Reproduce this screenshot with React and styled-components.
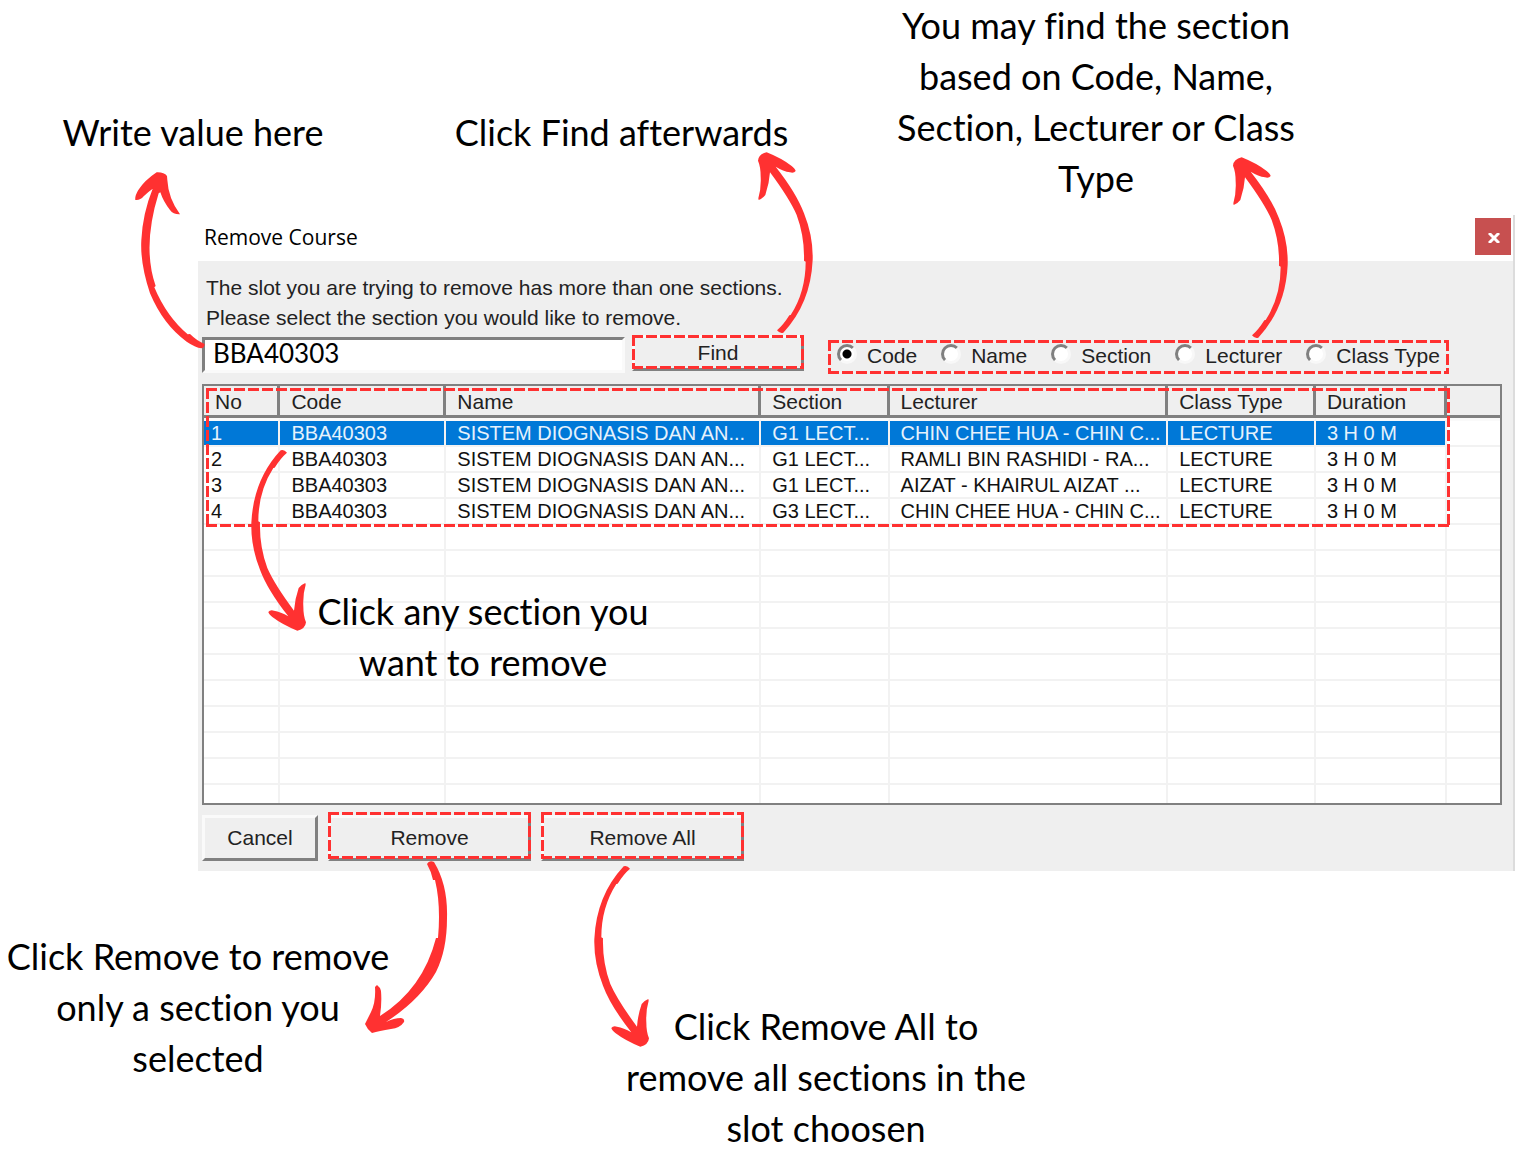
import React, { useState } from "react";
import styled, { createGlobalStyle, css } from "styled-components";

const GlobalStyle = createGlobalStyle`
  * {
    box-sizing: border-box;
  }
  body {
    margin: 0;
    background: #fff;
    color: #000;
    font-family: "Liberation Sans", Arial, sans-serif;
  }
`;

const RED = "#ff3131";

const Page = styled.main`
  position: relative;
`;

const TopNotes = styled.section`
  display: grid;
  grid-template-columns: 386fr 471fr 478fr 186fr;
  align-items: start;
  min-height: 215px;
`;

const BottomNotes = styled.section`
  display: grid;
  grid-template-columns: 396fr 860fr 265fr;
  padding: 60px 0 8px;
`;

const Note = styled.p`
  margin: 0;
  padding-top: ${({ $drop }) => $drop || 0}px;
  font-family: Lato, sans-serif;
  font-size: 36px;
  font-variant-ligatures: none;
  line-height: 51px;
  text-align: center;
`;

const TableNote = styled(Note)`
  position: absolute;
  top: 371px;
  left: 112px;
  width: 346px;
  pointer-events: none;
`;

const Window = styled.section`
  position: relative;
  margin: 0 6px 0 198px;
  border-right: 2px solid #dcdcdc;
`;

const TitleBar = styled.header`
  display: flex;
  align-items: center;
  justify-content: space-between;
  height: 46px;
  padding: 0 2px 3px 6px;
`;

const Title = styled.h1`
  margin: 0;
  font-family: "Open Sans", sans-serif;
  font-size: 21px;
  font-weight: 400;
`;

const CloseButton = styled.button`
  display: flex;
  align-items: center;
  justify-content: center;
  width: 36px;
  height: 37px;
  padding: 2px 0 0 2px;
  border: 0;
  background: #c75050;
`;

const Body = styled.div`
  padding: 12px 11px 10px 4px;
  background: #efefef;
`;

const Message = styled.p`
  margin: 0;
  padding-left: 4px;
  color: #222;
  font-size: 21px;
  line-height: 30px;
`;

const SearchRow = styled.div`
  display: flex;
  align-items: flex-start;
  padding-top: 2px;
  margin-bottom: 10px;
`;

const SearchInput = styled.input`
  width: 423px;
  height: 36px;
  margin: 2px 7px 0 0;
  padding: 0 8px 5px;
  border: 3px solid #fafafa;
  border-top-color: #808080;
  border-left-color: #808080;
  background: #fff;
  font-family: Lato, sans-serif;
  font-size: 26px;
`;

/* dashed marker frame, 11px dashes with 3px gaps */
const dashes = css`
  content: "";
  position: absolute;
  inset: 0;
  pointer-events: none;
  background:
    repeating-linear-gradient(90deg, ${RED} 0 11px, transparent 11px 14px) top / 100% 3px no-repeat,
    repeating-linear-gradient(90deg, ${RED} 0 11px, transparent 11px 14px) bottom / 100% 3px no-repeat,
    repeating-linear-gradient(${RED} 0 11px, transparent 11px 14px) left / 3px 100% no-repeat,
    repeating-linear-gradient(${RED} 0 11px, transparent 11px 14px) right / 3px 100% no-repeat;
`;

const Marked = styled.div`
  position: relative;

  &::after {
    ${dashes}
    top: ${({ $rise }) => -($rise || 0)}px;
    bottom: 2px;
  }
`;

const Button = styled.button`
  width: ${({ $width }) => $width}px;
  height: ${({ $height }) => $height || 46}px;
  padding: 0;
  border: 3px solid #808080;
  border-top-color: #fafafa;
  border-left-color: #fafafa;
  background: #efefef;
  color: #222;
  font-family: inherit;
  font-size: 21px;
`;

const Filters = styled.fieldset`
  position: relative;
  display: flex;
  align-items: center;
  gap: 24px;
  height: 34px;
  margin: 5px 0 0 24px;
  padding: 0 9px 2px;
  border: 0;

  &::after {
    ${dashes}
  }
`;

const FilterLabel = styled.label`
  display: flex;
  align-items: center;
  gap: 10px;
  color: #222;
  font-size: 21px;
  line-height: 28px;
  white-space: nowrap;
`;

const Radio = styled.input`
  appearance: none;
  width: 20px;
  height: 20px;
  margin: 0 0 4px;
  border: 3px solid #f8f8f8;
  border-top-color: #808080;
  border-left-color: #808080;
  border-radius: 50%;
  background: #fff;

  &:checked {
    background: radial-gradient(circle, #000 0 4px, #fff 5px);
  }
`;

const TableBox = styled.div`
  position: relative;
  border: 2px solid #808080;
  background: #fff;
`;

const TableMark = styled.div`
  position: absolute;
  top: 2px;
  left: 2px;
  width: 96%;
  height: 139px;
  pointer-events: none;

  &::after {
    ${dashes}
  }
`;

const Table = styled.table`
  width: 100%;
  table-layout: fixed;
  border-collapse: separate;
  border-spacing: 0;
`;

const Th = styled.th`
  width: ${({ $width }) => $width || "auto"};
  height: 32px;
  padding: 3px 0 0 11px;
  border-right: 3px solid #808080;
  border-bottom: 3px solid #808080;
  background: #efefef;
  color: #222;
  font-size: 21px;
  font-weight: 400;
  line-height: 26px;
  text-align: left;
  white-space: nowrap;

  &:last-child {
    border-right: 0;
  }
`;

const Td = styled.td`
  height: 26px;
  padding: 0 0 0 11px;
  border-right: 2px solid #f2f2f2;
  border-bottom: 2px solid #f2f2f2;
  color: #111;
  font-size: 20px;
  line-height: 24px;
  white-space: nowrap;
  overflow: hidden;

  &:first-child {
    padding-left: 7px;
  }
  &:last-child {
    border-right: 0;
  }
`;

const Row = styled.tr`
  cursor: default;

  &:first-child td {
    height: 29px;
    border-top: 3px solid #fafafa;
  }
  &:last-child td {
    height: 18px;
    border-bottom: 0;
  }
  ${({ $selected }) =>
    $selected &&
    css`
      td:not(:last-child) {
        background: #0078d7;
        background-clip: padding-box;
        color: #e6f2fc;
      }
    `}
`;

const Footer = styled.footer`
  display: flex;
  align-items: flex-end;
  gap: 10px;
  margin-top: 10px;
`;

const ArrowSvg = styled.svg`
  position: absolute;
  top: ${({ $top }) => $top}px;
  left: ${({ $left }) => $left}px;
  fill: ${RED};
  pointer-events: none;
  transform: ${({ $flip }) => ($flip ? "rotate(180deg)" : "none")};
`;

const RightArrow = (props) => (
  <ArrowSvg {...props} width="59" height="185" viewBox="468 30 177 555" aria-hidden="true">
    <path d="M500 37 Q545 55 575 78 Q586 87 587 93 Q582 100 570 97 Q550 94 527 80 Q590 160 612 220 Q640 290 638 360 Q632 490 550 578 Q540 582 531 571 Q550 555 568 526 L572 525 Q617 455 617 365 L612 362 Q614 290 590 225 Q568 175 510 97 Q508 130 496 165 Q488 176 476 180 L475 175 Q484 145 482 110 Q482 80 474 62 Q476 42 500 37Z" />
  </ArrowSvg>
);

const InputArrow = (props) => (
  <ArrowSvg {...props} width="74" height="181" viewBox="39 60 222 543" aria-hidden="true">
    <path d="M110 67 Q132 66 141 78 L142 90 Q145 145 180 193 Q160 194 150 180 Q130 155 121 127 L116 130 Q66 290 107 408 L103 412 Q140 500 203 553 L210 552 Q230 572 254 582 Q254 592 245 595 Q225 592 200 575 Q130 525 90 430 Q60 340 64 270 Q68 190 98 116 Q85 125 71 139 Q60 152 46 150 Q44 138 55 120 Q75 90 110 67Z" />
  </ArrowSvg>
);

const RemoveArrow = (props) => (
  <ArrowSvg {...props} width="86" height="178" viewBox="363 858 86 178" aria-hidden="true">
    <path d="M427 864 Q429 860 434 862 Q448 885 447 918 Q447 950 436 972 Q420 1000 386 1022 Q394 1018 401 1018 Q405 1019 404 1022 Q400 1028 391 1029 Q379 1031 372 1033 Q367 1029 365 1024 Q368 1018 371 1012 Q376 1002 375 987 L377 985 Q380 987 381 991 Q382 1003 380 1016 Q423 989 436 938 L438 938 Q441 905 435 880 L433 880 Q431 871 427 864Z" />
  </ArrowSvg>
);

const columns = [
  { title: "No", width: "5.9%" },
  { title: "Code", width: "12.8%" },
  { title: "Name", width: "24.3%" },
  { title: "Section", width: "9.9%" },
  { title: "Lecturer", width: "21.5%" },
  { title: "Class Type", width: "11.4%" },
  { title: "Duration", width: "10.1%" },
  { title: "" },
];

const sections = [
  ["1", "BBA40303", "SISTEM DIOGNASIS DAN AN...", "G1 LECT...", "CHIN CHEE HUA - CHIN C...", "LECTURE", "3 H 0 M"],
  ["2", "BBA40303", "SISTEM DIOGNASIS DAN AN...", "G1 LECT...", "RAMLI BIN RASHIDI - RA...", "LECTURE", "3 H 0 M"],
  ["3", "BBA40303", "SISTEM DIOGNASIS DAN AN...", "G1 LECT...", "AIZAT - KHAIRUL AIZAT ...", "LECTURE", "3 H 0 M"],
  ["4", "BBA40303", "SISTEM DIOGNASIS DAN AN...", "G3 LECT...", "CHIN CHEE HUA - CHIN C...", "LECTURE", "3 H 0 M"],
];

const ROW_COUNT = 15;
const filters = ["Code", "Name", "Section", "Lecturer", "Class Type"];

const SectionTable = () => {
  const [selected, setSelected] = useState(0);
  const rows = Array.from({ length: ROW_COUNT }, (_, i) => sections[i] || []);

  return (
    <TableBox>
      <Table>
        <thead>
          <tr>
            {columns.map((col) => (
              <Th key={col.title} $width={col.width}>
                {col.title}
              </Th>
            ))}
          </tr>
        </thead>
        <tbody>
          {rows.map((row, i) => (
            <Row key={i} $selected={i === selected} onClick={() => row.length && setSelected(i)}>
              {columns.map((col, j) => (
                <Td key={col.title}>{row[j]}</Td>
              ))}
            </Row>
          ))}
        </tbody>
      </Table>
      <TableMark />
    </TableBox>
  );
};

const App = () => {
  const [value, setValue] = useState("BBA40303");
  const [filter, setFilter] = useState("Code");

  return (
    <Page>
      <GlobalStyle />
      <TopNotes>
        <Note $drop={107}>Write value here</Note>
        <Note $drop={107}>Click Find afterwards</Note>
        <Note>
          You may find the section
          <br />
          based on Code, Name,
          <br />
          Section, Lecturer or Class
          <br />
          Type
        </Note>
      </TopNotes>

      <Window>
        <TitleBar>
          <Title>Remove Course</Title>
          <CloseButton aria-label="Close">
            <svg width="12" height="10" viewBox="0 0 12 10" stroke="#fff" strokeWidth="3">
              <path d="M1 0 L11 10 M11 0 L1 10" />
            </svg>
          </CloseButton>
        </TitleBar>
        <Body>
          <Message>The slot you are trying to remove has more than one sections.</Message>
          <Message>Please select the section you would like to remove.</Message>
          <SearchRow>
            <SearchInput aria-label="Search value" value={value} onChange={(e) => setValue(e.target.value)} />
            <Marked>
              <Button $width={172} $height={36}>
                Find
              </Button>
            </Marked>
            <Filters aria-label="Find by">
              {filters.map((name) => (
                <FilterLabel key={name}>
                  <Radio type="radio" name="filter" checked={filter === name} onChange={() => setFilter(name)} />
                  {name}
                </FilterLabel>
              ))}
            </Filters>
          </SearchRow>
          <SectionTable />
          <Footer>
            <Button $width={116}>Cancel</Button>
            <Marked $rise={3}>
              <Button $width={203}>Remove</Button>
            </Marked>
            <Marked $rise={3}>
              <Button $width={203}>Remove All</Button>
            </Marked>
          </Footer>
        </Body>
        <TableNote>Click any section you want to remove</TableNote>
        <InputArrow $top={-45} $left={-65} />
        <RightArrow $top={-65} $left={558} />
        <RightArrow $top={-60} $left={1033} />
        <RightArrow $top={233} $left={51} $flip />
        <RemoveArrow $top={643} $left={165} />
        <RightArrow $top={649} $left={394} $flip />
      </Window>

      <BottomNotes>
        <Note>
          Click Remove to remove
          <br />
          only a section you
          <br />
          selected
        </Note>
        <Note $drop={70}>
          Click Remove All to
          <br />
          remove all sections in the
          <br />
          slot choosen
        </Note>
      </BottomNotes>
    </Page>
  );
};

export default App;
